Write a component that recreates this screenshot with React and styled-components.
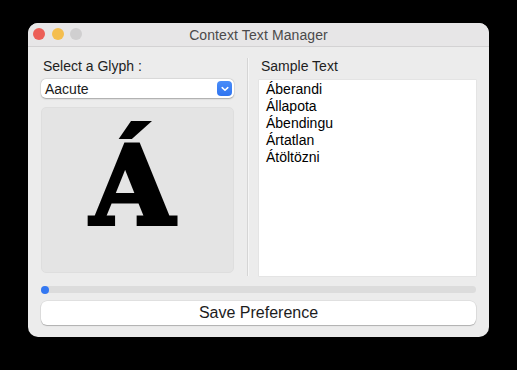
import styled, { createGlobalStyle } from "styled-components";

const Global = createGlobalStyle`
  html, body {
    margin: 0;
    background: #000;
  }
  body {
    font-family: "Liberation Sans", Arial, sans-serif;
  }
`

const Screen = styled.div`
  width: 517px;
  height: 370px;
  padding: 23px 0 0 28px;
  box-sizing: border-box;
  background: #000;
`
const Window = styled.div`
  width: 461px;
  height: 314px;
  display: flex;
  flex-direction: column;
  background: #ececec;
  border-radius: 10px;
  overflow: hidden;
`
const TitleBar = styled.div`
  position: relative;
  height: 23px;
  display: flex;
  align-items: center;
  justify-content: center;
  background: #e7e6e7;
  border-bottom: 1px solid #d3d2d3;
`
const Lights = styled.div`
  position: absolute;
  left: 5px;
  top: 5px;
  display: flex;
  gap: 6.5px;
`
const Light = styled.span`
  width: 12px;
  height: 12px;
  border-radius: 50%;
  background: ${p => p.$color};
`
const Title = styled.div`
  font-size: 14px;
  color: #4b4a4b;
  letter-spacing: 0.1px;
`
const Body = styled.div`
  display: flex;
  flex-direction: column;
  padding: 11px 13px 12px;
`
const Columns = styled.div`
  display: flex;
  height: 218px;
`
const Column = styled.div`
  display: flex;
  flex-direction: column;
  width: ${p => p.$width}px;
`
const Label = styled.div`
  font-size: 14px;
  line-height: 17px;
  color: #1e1e1e;
  padding-left: 2px;
  margin-bottom: ${p => p.$gap}px;
`
const Select = styled.div`
  height: 19px;
  display: flex;
  align-items: center;
  justify-content: space-between;
  padding: 0 2px 0 4px;
  background: #fff;
  border-radius: 5px;
  box-shadow: 0 0.5px 1.5px rgba(0, 0, 0, 0.28), 0 0 0 0.5px rgba(0, 0, 0, 0.06);
  font-size: 14px;
  color: #1a1a1a;
`
const Chevron = styled.span`
  width: 15px;
  height: 15px;
  display: flex;
  align-items: center;
  justify-content: center;
  border-radius: 4px;
  background: linear-gradient(#4a8df8, #2f74f0);
`
const GlyphBox = styled.div`
  margin-top: 9px;
  height: 166px;
  box-sizing: border-box;
  padding: 23px 10px 0 0;
  background: #e4e4e4;
  border: 1px solid #dedede;
  border-radius: 5px;
  text-align: center;
  font-family: "DejaVu Serif", serif;
  font-weight: bold;
  font-size: 108px;
  line-height: 110px;
  color: #000;
  -webkit-text-stroke: 4px #000;
`
const Divider = styled.div`
  width: 1px;
  margin: 0 11px 0 13px;
  background: #d5d5d5;
  box-shadow: 1px 0 0 #f6f6f6;
`
const TextArea = styled.div`
  flex: 1;
  background: #fff;
  padding: 1px 7px;
  font-size: 14px;
  line-height: 17px;
  color: #000;
  box-shadow: 0 0 0 0.5px #dcdcdc;
`
const Track = styled.div`
  margin-top: 10px;
  height: 7px;
  display: flex;
  align-items: center;
  background: #dcdcdc;
  border-radius: 4px;
`
const Knob = styled.span`
  width: 8px;
  height: 8px;
  border-radius: 50%;
  background: #3478f2;
`
const Button = styled.button`
  margin-top: 8px;
  height: 24px;
  border: none;
  border-radius: 6px;
  background: #fff;
  box-shadow: 0 1px 1px rgba(0, 0, 0, 0.22), 0 0 0 0.5px rgba(0, 0, 0, 0.1);
  font-family: "Liberation Sans", Arial, sans-serif;
  font-size: 16px;
  color: #1c1c1c;
  padding: 0;
`

const words = ["Áberandi", "Állapota", "Ábendingu", "Ártatlan", "Átöltözni"];

function App() {
  return (
    <Screen>
      <Global />
      <Window>
        <TitleBar>
          <Lights>
            <Light $color="#ec5f57" />
            <Light $color="#f4be4f" />
            <Light $color="#d0cfd0" />
          </Lights>
          <Title>Context Text Manager</Title>
        </TitleBar>
        <Body>
          <Columns>
            <Column $width={193}>
              <Label $gap={4}>Select a Glyph :</Label>
              <Select>
                Aacute
                <Chevron>
                  <svg width="8" height="6" viewBox="0 0 8 6">
                    <path d="M1.2 1.6 L4 4.3 L6.8 1.6" fill="none" stroke="#fff" strokeWidth="1.5" strokeLinecap="round" strokeLinejoin="round" />
                  </svg>
                </Chevron>
              </Select>
              <GlyphBox>Á</GlyphBox>
            </Column>
            <Divider />
            <Column $width={217}>
              <Label $gap={5}>Sample Text</Label>
              <TextArea>
                {words.map(w => <div key={w}>{w}</div>)}
              </TextArea>
            </Column>
          </Columns>
          <Track>
            <Knob />
          </Track>
          <Button>Save Preference</Button>
        </Body>
      </Window>
    </Screen>
  );
}

export default App;
